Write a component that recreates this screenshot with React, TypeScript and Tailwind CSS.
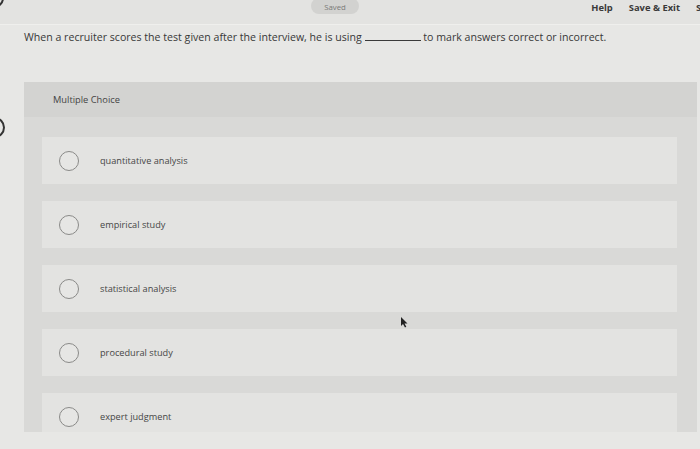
const options = [
  "quantitative analysis",
  "empirical study",
  "statistical analysis",
  "procedural study",
  "expert judgment",
];

function Radio() {
  return (
    <span className="block h-[20px] w-[20px] shrink-0 rounded-full border border-[#8a8a88] bg-[#e6e6e4]" />
  );
}

export default function App() {
  return (
    <div className="relative h-[449px] w-[700px] overflow-hidden bg-[#e7e7e5] font-['Open_Sans',_'Lato',_sans-serif] text-[#3b3b3b]">
      {/* top bar */}
      <div className="flex h-[25px] items-start border-b border-[#efefed] bg-[#e3e3e1]">
        <div className="w-[311px]" />
        <div className="-mt-[2px] flex h-[16px] w-[48px] items-center justify-center rounded-full bg-[#d2d2d0] pt-[1px] text-[7.8px] leading-[10px] text-[#7a7a78]">
          Saved
        </div>
        <div className="flex-1" />
        <div className="mt-[1px] flex items-center text-[9.4px] font-bold text-[#3a3a3a]">
          <span>Help</span>
          <span className="ml-[16px]">Save &amp; Exit</span>
          <span className="ml-[16px] w-[4px] overflow-hidden">S</span>
        </div>
      </div>

      {/* question */}
      <p className="mt-[6px] pl-[24px] text-[10.6px] leading-[13px] text-[#383838]">
        When a recruiter scores the test given after the interview, he is using{" "}
        <span className="inline-block w-[56px] border-b border-[#3a3a3a] align-baseline" />{" "}
        to mark answers correct or incorrect.
      </p>

      {/* answer panel */}
      <div className="ml-[24px] mt-[38px] h-[350px] w-[673px] overflow-hidden bg-[#d9d9d7]">
        <div className="flex h-[35px] items-center bg-[#d3d3d1] pl-[29px] text-[9.3px] text-[#444]">
          Multiple Choice
        </div>
        <div className="flex flex-col gap-[17px] pl-[18px] pr-[20px] pt-[20px]">
          {options.map((o) => (
            <div
              key={o}
              className="flex h-[47px] shrink-0 items-center bg-[#e3e3e1] pl-[17px]"
            >
              <Radio />
              <span className="ml-[21px] text-[9.2px] text-[#464646]">{o}</span>
            </div>
          ))}
        </div>
      </div>

      {/* edge artifacts from the photo */}
      <span className="absolute -left-[16px] -top-[12px] h-[20px] w-[20px] rounded-full border-2 border-[#333]" />
      <span className="absolute -left-[16px] top-[117px] h-[21px] w-[21px] rounded-full border-2 border-[#333]" />

      {/* mouse pointer */}
      <svg
        className="absolute left-[400px] top-[317px]"
        width="8"
        height="11"
        viewBox="0 0 8 11"
      >
        <path d="M1 0 L1 9 L3 7 L5 10.5 L6.3 9.8 L4.5 6.6 L7.5 6.4 Z" fill="#222" />
      </svg>
    </div>
  );
}
